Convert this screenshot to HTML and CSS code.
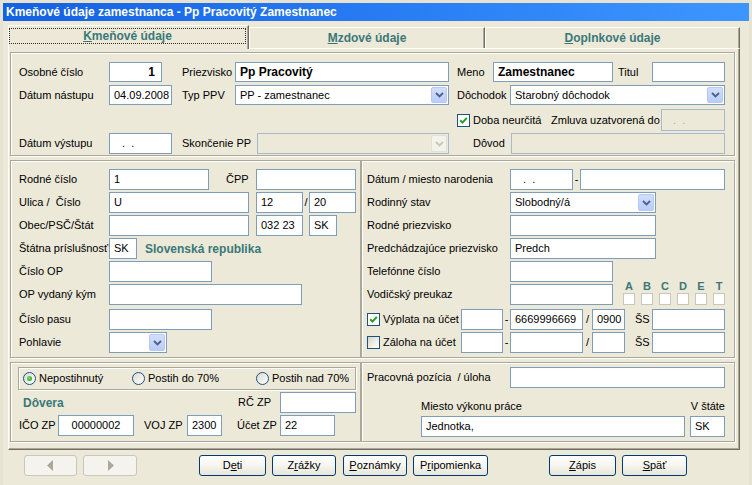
FILE: index.html
```html
<!DOCTYPE html>
<html lang="sk">
<head>
<meta charset="utf-8">
<title>Kmeňové údaje zamestnanca</title>
<link rel="stylesheet" href="styles.css">
</head>
<body>
<div class="window">
  <div class="titlebar">Kmeňové údaje zamestnanca - Pp Pracovitý Zamestnanec</div>
  <div class="client">
    <div class="tabs">
      <div class="tab tab-1 sel"><span class="focus"><u>K</u>meňové údaje</span></div>
      <div class="tab tab-2"><u>M</u>zdové údaje</div>
      <div class="tab tab-3"><u>D</u>oplnkové údaje</div>
    </div>
    <div class="panel">
      <!-- group 1 -->
      <div class="gb gb1">
        <div class="row h20">
          <span class="lbl w90">Osobné číslo</span>
          <span class="tb w53 bold right">1</span>
          <span class="lbl w53 ml20">Priezvisko</span>
          <span class="tb w214 bold">Pp Pracovitý</span>
          <span class="lbl w36 ml8">Meno</span>
          <span class="tb w120 bold">Zamestnanec</span>
          <span class="lbl w34 ml5">Titul</span>
          <span class="tb w73"></span>
        </div>
        <div class="row h20 mt3">
          <span class="lbl w90">Dátum nástupu</span>
          <span class="tb w63">04.09.2008</span>
          <span class="lbl w53 ml10">Typ PPV</span>
          <span class="tb dd w214"><span class="ddtext">PP - zamestnanec</span><span class="ddb"><svg width="9" height="6" viewBox="0 0 9 6"><path d="M1 1 L4.5 4.5 L8 1" fill="none" stroke="#4d6185" stroke-width="1.8"/></svg></span></span>
          <span class="lbl w53 ml8">Dôchodok</span>
          <span class="tb dd w215"><span class="ddtext">Starobný dôchodok</span><span class="ddb"><svg width="9" height="6" viewBox="0 0 9 6"><path d="M1 1 L4.5 4.5 L8 1" fill="none" stroke="#4d6185" stroke-width="1.8"/></svg></span></span>
        </div>
        <div class="row h22 mt4">
          <span class="cb ml438"><svg width="11" height="11" viewBox="0 0 11 11"><path d="M2.2 5.2 L4.5 7.6 L8.8 2.8" fill="none" stroke="#21a121" stroke-width="2"/></svg></span>
          <span class="lbl w78 ml3">Doba neurčitá</span>
          <span class="lbl w110">Zmluva uzatvorená do</span>
          <span class="tb dis w64 dots">.&nbsp;&nbsp;.</span>
        </div>
        <div class="row mt2">
          <span class="lbl w90">Dátum výstupu</span>
          <span class="tb w63 dots">.&nbsp;&nbsp;.</span>
          <span class="lbl w75 ml10">Skončenie PP</span>
          <span class="tb dd dis w192"><span class="ddtext"></span><span class="ddb ddb-dis"><svg width="9" height="6" viewBox="0 0 9 6"><path d="M1 1 L4.5 4.5 L8 1" fill="none" stroke="#c9c7ba" stroke-width="1.8"/></svg></span></span>
          <span class="lbl w38 ml24">Dôvod</span>
          <span class="tb dis w214"></span>
        </div>
      </div>

      <!-- group 2 -->
      <div class="gbrow mt4">
        <div class="gb gl gb2">
          <div class="row">
            <span class="lbl w90">Rodné číslo</span>
            <span class="tb w100">1</span>
            <span class="lbl w30 ml17">ČPP</span>
            <span class="tb w100"></span>
          </div>
          <div class="row mt2">
            <span class="lbl w90">Ulica /&nbsp; Číslo</span>
            <span class="tb w140">U</span>
            <span class="tb w47 ml7">12</span>
            <span class="sep w6">/</span>
            <span class="tb w47">20</span>
          </div>
          <div class="row mt2">
            <span class="lbl w90">Obec/PSČ/Štát</span>
            <span class="tb w140"></span>
            <span class="tb w47 ml7">032 23</span>
            <span class="tb w28 ml6">SK</span>
          </div>
          <div class="row mt2">
            <span class="lbl w90">Štátna príslušnosť</span>
            <span class="tb w28">SK</span>
            <span class="teal ml8">Slovenská republika</span>
          </div>
          <div class="row mt2">
            <span class="lbl w90">Číslo OP</span>
            <span class="tb w103"></span>
          </div>
          <div class="row mt2">
            <span class="lbl w90">OP vydaný kým</span>
            <span class="tb w193"></span>
          </div>
          <div class="row mt4">
            <span class="lbl w90">Číslo pasu</span>
            <span class="tb w103"></span>
          </div>
          <div class="row mt2">
            <span class="lbl w90">Pohlavie</span>
            <span class="tb dd w58"><span class="ddtext"></span><span class="ddb"><svg width="9" height="6" viewBox="0 0 9 6"><path d="M1 1 L4.5 4.5 L8 1" fill="none" stroke="#4d6185" stroke-width="1.8"/></svg></span></span>
          </div>
        </div>

        <div class="gb gr gb2">
          <div class="row">
            <span class="lbl w143">Dátum / miesto narodenia</span>
            <span class="tb w63 dots">.&nbsp;&nbsp;.</span>
            <span class="sep w7">-</span>
            <span class="tb w145"></span>
          </div>
          <div class="row mt2">
            <span class="lbl w143">Rodinný stav</span>
            <span class="tb dd w146"><span class="ddtext">Slobodný/á</span><span class="ddb"><svg width="9" height="6" viewBox="0 0 9 6"><path d="M1 1 L4.5 4.5 L8 1" fill="none" stroke="#4d6185" stroke-width="1.8"/></svg></span></span>
          </div>
          <div class="row mt2">
            <span class="lbl w143">Rodné priezvisko</span>
            <span class="tb w146"></span>
          </div>
          <div class="row mt2">
            <span class="lbl w143">Predchádzajúce priezvisko</span>
            <span class="tb w146">Predch</span>
          </div>
          <div class="row mt2">
            <span class="lbl w143">Telefónne číslo</span>
            <span class="tb w103"></span>
          </div>
          <div class="row mt2">
            <span class="lbl w143">Vodičský preukaz</span>
            <span class="tb w103"></span>
            <div class="lic ml10">
              <div class="lcol"><span class="lt">A</span><span class="lbox"></span></div>
              <div class="lcol"><span class="lt">B</span><span class="lbox"></span></div>
              <div class="lcol"><span class="lt">C</span><span class="lbox"></span></div>
              <div class="lcol"><span class="lt">D</span><span class="lbox"></span></div>
              <div class="lcol"><span class="lt">E</span><span class="lbox"></span></div>
              <div class="lcol"><span class="lt">T</span><span class="lbox"></span></div>
            </div>
          </div>
          <div class="row mt4">
            <span class="cb"><svg width="11" height="11" viewBox="0 0 11 11"><path d="M2.2 5.2 L4.5 7.6 L8.8 2.8" fill="none" stroke="#21a121" stroke-width="2"/></svg></span>
            <span class="lbl w78 ml3">Výplata na účet</span>
            <span class="tb w42"></span>
            <span class="sep w7">-</span>
            <span class="tb w73">6669996669</span>
            <span class="sep w9">/</span>
            <span class="tb w33">0900</span>
            <span class="lbl w17 ml10">ŠS</span>
            <span class="tb w73"></span>
          </div>
          <div class="row mt2">
            <span class="cb cb-off"></span>
            <span class="lbl w78 ml3">Záloha na účet</span>
            <span class="tb w42"></span>
            <span class="sep w7">-</span>
            <span class="tb w73"></span>
            <span class="sep w9">/</span>
            <span class="tb w33"></span>
            <span class="lbl w17 ml10">ŠS</span>
            <span class="tb w73"></span>
          </div>
        </div>
      </div>

      <!-- group 3 -->
      <div class="gbrow mt4">
        <div class="gb gl gb3 g3l">
          <div class="radiobox">
            <span class="opt w109"><span class="rb on"><span class="dot"></span></span><span class="ml3">Nepostihnutý</span></span>
            <span class="opt w124"><span class="rb"></span><span class="ml3">Postih do 70%</span></span>
            <span class="opt"><span class="rb"></span><span class="ml3">Postih nad 70%</span></span>
          </div>
          <div class="row mt2">
            <span class="teal w219 pl4">Dôvera</span>
            <span class="lbl w42">RČ ZP</span>
            <span class="tb w76"></span>
          </div>
          <div class="row mt2">
            <span class="lbl w39">IČO ZP</span>
            <span class="tb w76 center">00000002</span>
            <span class="lbl w43 ml10">VOJ ZP</span>
            <span class="tb w35">2300</span>
            <span class="lbl w43 ml15">Účet ZP</span>
            <span class="tb w55">22</span>
          </div>
        </div>
        <div class="gb gr gb3 g3r">
          <div class="row">
            <span class="lbl w143">Pracovná pozícia&nbsp; / úloha</span>
            <span class="tb w215"></span>
          </div>
          <div class="row h16 mt10">
            <span class="lbl w269 ml54">Miesto výkonu práce</span>
            <span class="lbl w35 right">V štáte</span>
          </div>
          <div class="row mt2">
            <span class="tb w264 ml54">Jednotka,</span>
            <span class="tb w35 ml5">SK</span>
          </div>
        </div>
      </div>
    </div>

    <div class="btnrow">
      <span class="btn dis w53"><svg width="7" height="11" viewBox="0 0 7 11"><polygon points="6,0 6,11 0,5.5" fill="#aca899"/></svg></span>
      <span class="btn dis w54 ml6"><svg width="7" height="11" viewBox="0 0 7 11"><polygon points="1,0 1,11 7,5.5" fill="#aca899"/></svg></span>
      <span class="btn w67 ml62">D<u>e</u>ti</span>
      <span class="btn w64 ml6">Z<u>r</u>ážky</span>
      <span class="btn w64 ml7"><u>P</u>oznámky</span>
      <span class="btn w75 ml6">P<u>r</u>ipomienka</span>
      <span class="btn w67 ml61"><u>Z</u>ápis</span>
      <span class="btn w65 ml6"><u>S</u>päť</span>
    </div>
  </div>
</div>
</body>
</html>
```
FILE: styles.css
```css
* { box-sizing: border-box; margin: 0; padding: 0; }

body {
  background: #ece9d8;
  font-family: "Liberation Sans", Arial, sans-serif;
  font-size: 11px;
  line-height: 1;
  color: #000;
}

.window {
  width: 752px;
  height: 485px;
  border-style: solid;
  border-width: 3px 3px 0 3px;
  border-color: #e6e3d3;
  overflow: hidden;
}

.titlebar {
  height: 18px;
  background: linear-gradient(90deg, #1461e3 0%, #2a7ef4 55%, #3d96ff 100%);
  color: #fff;
  font-weight: bold;
  font-size: 12px;
  display: flex;
  align-items: center;
  padding-left: 3px;
}

.client { padding: 4px 0 0 5px; }

/* tabs */
.tabs {
  display: flex;
  align-items: flex-end;
  height: 23px;
}
.tab {
  flex: none;
  height: 21px;
  background: #ece9d8;
  border-top: 1px solid #fff;
  border-left: 1px solid #fff;
  border-right: 1px solid #716f64;
  box-shadow: inset -1px 0 0 #aca899;
  border-top-left-radius: 2px;
  display: flex;
  align-items: center;
  justify-content: center;
  font-weight: bold;
  font-size: 12px;
  color: #3a7878;
}
.tab.sel {
  height: 24px;
  margin-bottom: -1px;
  position: relative;
  z-index: 1;
  align-items: flex-start;
  justify-content: flex-start;
  padding-top: 2px;
}
.tab-1 { width: 241px; }
.tab-2 { width: 236px; }
.tab-3 { width: 255px; }
.focus {
  width: 237px;
  height: 16px;
  border: 1px dotted #3b2a22;
  display: flex;
  align-items: center;
  justify-content: center;
}

/* panel */
.panel {
  width: 732px;
  height: 402px;
  border-top: 1px solid #fff;
  border-left: 1px solid #fff;
  border-right: 1px solid #716f64;
  border-bottom: 1px solid #716f64;
  box-shadow: inset -1px -1px 0 #aca899;
  padding: 3px 0 0 1px;
}

.gb {
  flex: none;
  border: 1px solid #aca899;
  box-shadow: inset 1px 1px 0 #fff, 1px 1px 0 #fff;
}
.gb1 { width: 725px; height: 104px; padding: 9px 0 0 8px; }
.gbrow { display: flex; }
.gl { width: 351px; padding: 8px 0 0 8px; }
.gr { width: 374px; padding: 8px 0 0 5px; }
.gb2 { height: 198px; }
.gb3 { height: 80px; }
.g3l, .g3r { padding-top: 4px; }

.row {
  display: flex;
  align-items: center;
  height: 21px;
}
.h20 { height: 20px; }
.h22 { height: 22px; }
.h16 { height: 16px; }

.lbl { flex: none; white-space: nowrap; }
.teal {
  flex: none;
  white-space: nowrap;
  color: #3a7878;
  font-weight: bold;
  font-size: 12px;
}
.sep { flex: none; text-align: center; }

.tb {
  flex: none;
  height: 100%;
  border: 1px solid #7f9db9;
  background: #fff;
  padding: 0 4px;
  display: flex;
  align-items: center;
  white-space: nowrap;
  overflow: hidden;
}
.tb.bold { font-weight: bold; font-size: 12px; }
.tb.right { justify-content: flex-end; padding-right: 6px; }
.tb.center { justify-content: center; }
.tb.dis { background: #ece9d8; border-color: #a9b9cc; color: #aca899; }
.tb.dots { padding-left: 12px; }
.tb.dis.dots { padding-left: 11px; }

.dd { padding-right: 0; }
.ddtext { flex: 1; }
.ddb {
  flex: none;
  width: 16px;
  height: calc(100% - 2px);
  margin: 1px;
  border: 1px solid #b7c9f3;
  border-radius: 2px;
  background: linear-gradient(#d2defc, #b9cdfa);
  display: flex;
  align-items: center;
  justify-content: center;
}
.ddb-dis { background: #f3f2eb; border-color: #e2e0d4; }

.right { text-align: right; }
.center { text-align: center; }

/* checkbox */
.cb {
  flex: none;
  width: 13px;
  height: 13px;
  border: 1px solid #1c5180;
  background: #fff;
  display: flex;
  align-items: center;
  justify-content: center;
}
.cb-off { background: linear-gradient(135deg, #d6d4c8 0%, #f1f0ea 60%, #fff 100%); }

/* licence boxes */
.lic {
  display: flex;
  gap: 6px;
  align-self: flex-end;
  height: 24px;
  flex: none;
}
.lcol {
  width: 12px;
  display: flex;
  flex-direction: column;
  align-items: center;
}
.lt {
  height: 10px;
  line-height: 10px;
  font-weight: bold;
  font-size: 11px;
  color: #3a7878;
}
.lbox {
  width: 12px;
  height: 12px;
  margin-top: 2px;
  border: 1px solid #c9c7ba;
  background: #fff;
}

/* radio */
.radiobox {
  width: 338px;
  height: 23px;
  margin-left: -1px;
  border: 1px solid #aca899;
  box-shadow: inset 1px 1px 0 #fff, 1px 1px 0 #fff;
  display: flex;
  align-items: center;
  padding-left: 4px;
}
.opt { flex: none; display: flex; align-items: center; white-space: nowrap; }
.rb {
  width: 13px;
  height: 13px;
  border-radius: 50%;
  border: 1px solid #1c5180;
  background: linear-gradient(135deg, #dcdad0, #fff);
  display: flex;
  align-items: center;
  justify-content: center;
}
.dot {
  width: 5px;
  height: 5px;
  border-radius: 50%;
  background: radial-gradient(circle at 40% 40%, #6fe06f, #1f9a1f);
}

/* buttons */
.btnrow {
  display: flex;
  align-items: center;
  height: 21px;
  margin-top: 5px;
  padding-left: 16px;
}
.btn {
  flex: none;
  height: 21px;
  border: 1px solid #003c74;
  border-radius: 3px;
  background: linear-gradient(#ffffff 0%, #f6f5ef 50%, #e8e5d8 100%);
  display: flex;
  align-items: center;
  justify-content: center;
  white-space: nowrap;
}
.btn.dis { border-color: #c9c7ba; background: #f4f3ee; }

/* widths */
.w6 { width: 6px; } .w7 { width: 7px; } .w9 { width: 9px; }
.w17 { width: 17px; } .w28 { width: 28px; } .w30 { width: 30px; }
.w33 { width: 33px; } .w34 { width: 34px; } .w35 { width: 35px; }
.w36 { width: 36px; } .w38 { width: 38px; } .w39 { width: 39px; }
.w42 { width: 42px; } .w43 { width: 43px; } .w47 { width: 47px; }
.w53 { width: 53px; } .w54 { width: 54px; } .w55 { width: 55px; }
.w58 { width: 58px; } .w63 { width: 63px; } .w64 { width: 64px; }
.w65 { width: 65px; } .w67 { width: 67px; } .w73 { width: 73px; }
.w75 { width: 75px; } .w76 { width: 76px; } .w78 { width: 78px; }
.w90 { width: 90px; } .w100 { width: 100px; } .w103 { width: 103px; }
.w109 { width: 109px; } .w110 { width: 110px; } .w120 { width: 120px; }
.w124 { width: 124px; } .w140 { width: 140px; } .w143 { width: 143px; }
.w145 { width: 145px; } .w146 { width: 146px; } .w192 { width: 192px; }
.w193 { width: 193px; } .w214 { width: 214px; } .w215 { width: 215px; }
.w219 { width: 219px; } .w264 { width: 264px; } .w269 { width: 269px; }

/* margins */
.ml3 { margin-left: 3px; } .ml5 { margin-left: 5px; } .ml6 { margin-left: 6px; }
.ml7 { margin-left: 7px; } .ml8 { margin-left: 8px; } .ml10 { margin-left: 10px; }
.ml15 { margin-left: 15px; } .ml17 { margin-left: 17px; } .ml20 { margin-left: 20px; }
.ml24 { margin-left: 24px; } .ml54 { margin-left: 54px; } .ml61 { margin-left: 61px; }
.ml62 { margin-left: 62px; } .ml438 { margin-left: 438px; }
.mt2 { margin-top: 2px; } .mt3 { margin-top: 3px; } .mt4 { margin-top: 4px; }
.mt10 { margin-top: 10px; }
.pl4 { padding-left: 4px; }
```
